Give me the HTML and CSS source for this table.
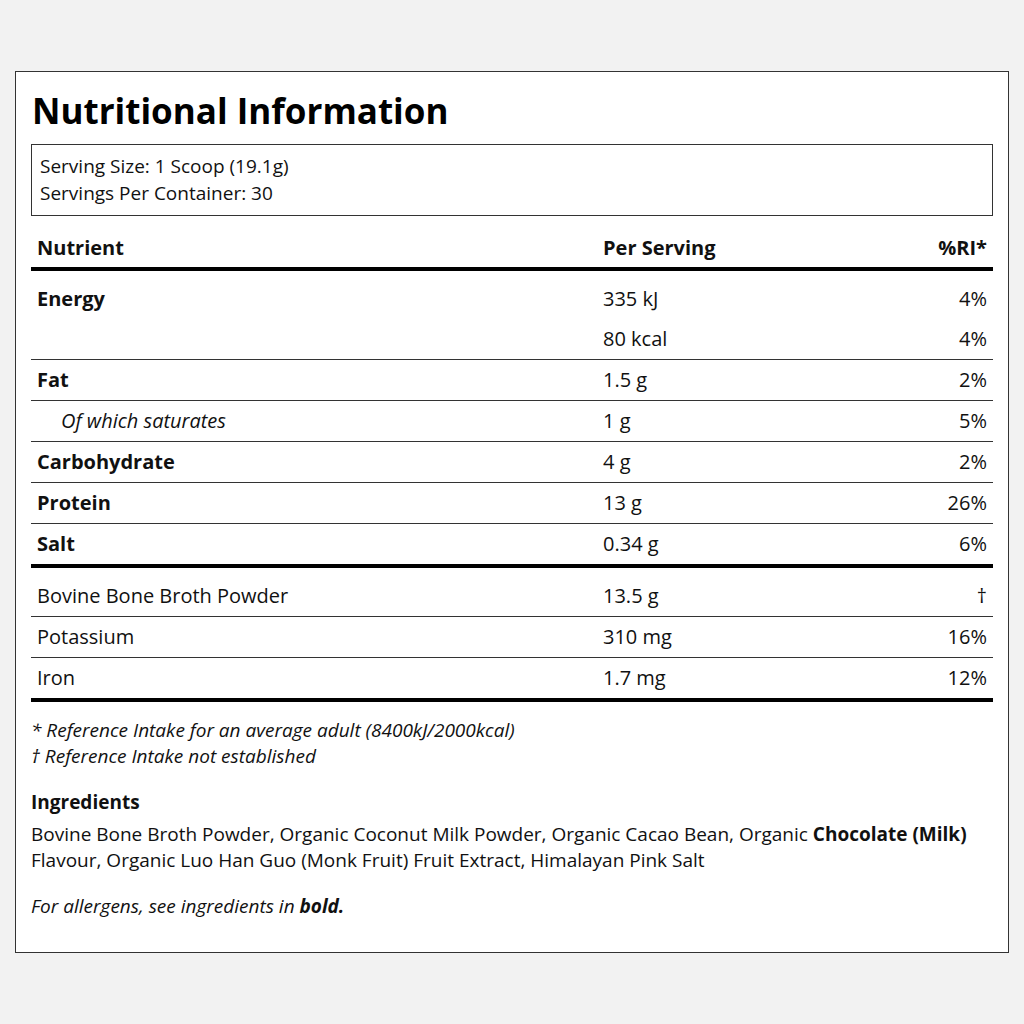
FILE: index.html
```html
<!DOCTYPE html>
<html lang="en">
<head>
    <meta charset="UTF-8">
    <meta name="viewport" content="width=device-width, initial-scale=1.0">
    <title>Nutritional Information</title>
    <link rel="stylesheet" href="styles.css">
</head>
<body>
    <div id="label">
        <h1>Nutritional Information</h1>
        <div class="serving">
            <div>Serving Size: 1 Scoop (19.1g)</div>
            <div>Servings Per Container: 30</div>
        </div>

        <table class="facts">
            <thead>
                <tr>
                    <th class="name">Nutrient</th>
                    <th class="amount">Per Serving</th>
                    <th class="ri">%RI*</th>
                </tr>
            </thead>
            <tbody class="group">
                <tr class="first no-line">
                    <td class="name bold">Energy</td>
                    <td class="amount">335 kJ</td>
                    <td class="ri">4%</td>
                </tr>
                <tr>
                    <td class="name"></td>
                    <td class="amount">80 kcal</td>
                    <td class="ri">4%</td>
                </tr>
                <tr>
                    <td class="name bold">Fat</td>
                    <td class="amount">1.5 g</td>
                    <td class="ri">2%</td>
                </tr>
                <tr>
                    <td class="name sub">Of which saturates</td>
                    <td class="amount">1 g</td>
                    <td class="ri">5%</td>
                </tr>
                <tr>
                    <td class="name bold">Carbohydrate</td>
                    <td class="amount">4 g</td>
                    <td class="ri">2%</td>
                </tr>
                <tr>
                    <td class="name bold">Protein</td>
                    <td class="amount">13 g</td>
                    <td class="ri">26%</td>
                </tr>
                <tr class="last">
                    <td class="name bold">Salt</td>
                    <td class="amount">0.34 g</td>
                    <td class="ri">6%</td>
                </tr>
            </tbody>
            <tbody class="group">
                <tr class="first">
                    <td class="name">Bovine Bone Broth Powder</td>
                    <td class="amount">13.5 g</td>
                    <td class="ri">&dagger;</td>
                </tr>
                <tr>
                    <td class="name">Potassium</td>
                    <td class="amount">310 mg</td>
                    <td class="ri">16%</td>
                </tr>
                <tr class="last">
                    <td class="name">Iron</td>
                    <td class="amount">1.7 mg</td>
                    <td class="ri">12%</td>
                </tr>
            </tbody>
        </table>

        <div class="notes">
            <p>* Reference Intake for an average adult (8400kJ/2000kcal)</p>
            <p>&dagger; Reference Intake not established</p>
        </div>

        <h2>Ingredients</h2>
        <p class="ingredients">Bovine Bone Broth Powder, Organic Coconut Milk Powder, Organic Cacao Bean, Organic <b>Chocolate (Milk)</b> Flavour, Organic Luo Han Guo (Monk Fruit) Fruit Extract, Himalayan Pink Salt</p>

        <p class="allergens">For allergens, see ingredients in <b>bold.</b></p>
    </div>
</body>
</html>
```

FILE: styles.css
```css
body {
    font-family: 'Open Sans', 'Liberation Sans', sans-serif;
    background-color: #f2f2f2;
    color: #111;
    margin: 0;
    padding: 71px 0 0 15px;
}

#label {
    box-sizing: border-box;
    width: 994px;
    height: 882px;
    background-color: #fff;
    border: 1px solid #333;
    padding: 16px 15px;
}

h1 {
    font-size: 35px;
    line-height: 42px;
    font-weight: 700;
    margin: 2px 0 12px 1px;
    color: #000;
}

.serving {
    border: 1px solid #333;
    padding: 8px 8px;
    font-size: 19px;
    line-height: 27px;
}

.facts {
    width: 100%;
    border-collapse: collapse;
    margin-top: 12px;
    font-size: 20px;
    line-height: 24px;
}

.facts th {
    font-weight: 700;
    padding: 8px 6px 7px;
    border-bottom: 4px solid #000;
}

.facts td {
    padding: 8px 6px;
    border-bottom: 1px solid #333;
}

.facts .name {
    text-align: left;
}

.facts .amount {
    text-align: left;
    width: 182px;
    padding-left: 6px;
}

.facts th.amount {
    width: 182px;
}

.facts .ri {
    text-align: right;
    width: 190px;
}

.facts .bold {
    font-weight: 700;
}

.facts .sub {
    font-style: italic;
    padding-left: 30px;
}

.facts tr.first td {
    padding-top: 16px;
}

.facts tr.no-line td {
    border-bottom: none;
}

.facts tr.last td {
    border-bottom: 4px solid #000;
}

.notes {
    margin-top: 15px;
    font-size: 19px;
    line-height: 26px;
    font-style: italic;
}

.notes p {
    margin: 0;
}

h2 {
    font-size: 19px;
    line-height: 26px;
    font-weight: 700;
    margin: 20px 0 6px 0;
}

.ingredients {
    font-size: 19px;
    line-height: 26px;
    margin: 0;
}

.allergens {
    font-size: 19px;
    line-height: 26px;
    font-style: italic;
    margin: 20px 0 0 0;
}
```
